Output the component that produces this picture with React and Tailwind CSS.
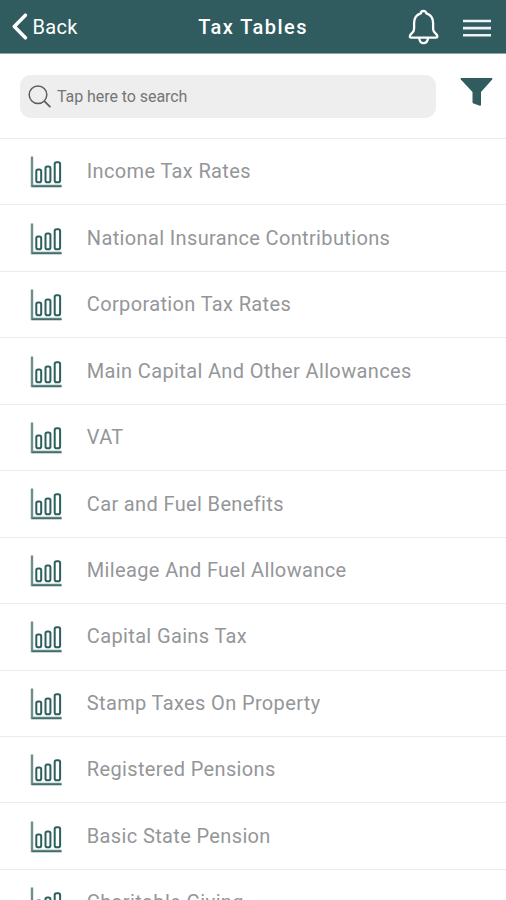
import React from "react";

const TAX_TABLES = [
  "Income Tax Rates",
  "National Insurance Contributions",
  "Corporation Tax Rates",
  "Main Capital And Other Allowances",
  "VAT",
  "Car and Fuel Benefits",
  "Mileage And Fuel Allowance",
  "Capital Gains Tax",
  "Stamp Taxes On Property",
  "Registered Pensions",
  "Basic State Pension",
  "Charitable Giving",
];

function ChartIcon() {
  return (
    <svg width="32" height="32" viewBox="0 0 32 32" fill="none" className="mt-px shrink-0">
      <path d="M2 0.5V30H31.5" stroke="#6d8f8c" strokeWidth="2.4" />
      <path d="M2 30.4H31.5" stroke="#41706e" strokeWidth="1.4" />
      <g stroke="#2c605f" strokeWidth="2">
        <rect x="6.3" y="13.4" width="4.9" height="12.8" rx="1.8" />
        <rect x="15.5" y="10.5" width="4.9" height="15.7" rx="1.8" />
        <rect x="24.7" y="6.3" width="5.4" height="19.9" rx="1.8" />
      </g>
    </svg>
  );
}

function Header() {
  return (
    <header className="grid h-[54px] shrink-0 grid-cols-[1fr_auto_1fr] items-center border-b border-[#8ba3a5] bg-[#305c5f] text-white">
      <button className="flex items-center pl-3">
        <svg width="16" height="27" viewBox="0 0 16 27" fill="none">
          <path
            d="M13.4 2.2L2.3 13.5L13.4 24.8"
            stroke="currentColor"
            strokeWidth="3.5"
            strokeLinecap="round"
            strokeLinejoin="round"
          />
        </svg>
        <span className="pl-[4.5px] pt-px text-[20px] leading-6 tracking-[0.3px]">Back</span>
      </button>

      <h1 className="pt-px text-[20px] font-medium leading-6 tracking-[1.45px]">
        Tax Tables
      </h1>

      <div className="flex items-center justify-end gap-[23px] pr-[15px]">
        <svg width="32" height="36" viewBox="0 0 32 36" fill="none">
          <g stroke="currentColor" strokeWidth="2.3" strokeLinejoin="round">
            <path d="M12.8 4.4C12.8 1.2 18.4 1.2 18.4 4.4C22.6 5.8 25.1 9 25.1 14V20C25.1 24 29.4 24.6 29.4 27.4C29.4 28.3 28.8 28.6 28 28.6H3.2C2.4 28.6 1.8 28.3 1.8 27.4C1.8 24.6 6.1 24 6.1 20V14C6.1 9 8.6 5.8 12.8 4.4Z" />
            <path d="M11.2 28.8C11.2 36 20 36 20 28.8" />
          </g>
        </svg>
        <svg width="28" height="20" viewBox="0 0 28 20" className="mt-[2px]">
          <path
            d="M0 3H28M0 10.1H28M0 17.2H28"
            stroke="#edf3f6"
            strokeWidth="2.6"
          />
        </svg>
      </div>
    </header>
  );
}

function SearchBar() {
  return (
    <div className="flex h-[84px] shrink-0 items-start pl-5 pr-[13px] pt-[21px]">
      <div className="flex h-[43px] w-[416px] items-center rounded-[11px] bg-[#eeeeee] pl-[7px]">
        <svg width="25" height="25" viewBox="0 0 25 25" fill="none">
          <circle cx="11" cy="10.8" r="8.8" stroke="#5c5c5c" strokeWidth="1.5" />
          <path d="M17.3 17.1L23.4 23.2" stroke="#5c5c5c" strokeWidth="1.8" />
        </svg>
        <span className="pl-[5px] text-[16px] tracking-[-0.06px] text-[#757575]">
          Tap here to search
        </span>
      </div>
      <svg width="33" height="30" viewBox="0 0 33 30" className="ml-auto mt-[2px]">
        <path
          d="M1.5 1H31.5C32.4 1 32.7 1.7 32.2 2.4L21 15V27.5C21 28.7 20.2 29.2 19.2 28.6L13.6 26.5C12.9 26.2 12.5 25.8 12.5 25V15L0.8 2.4C0.3 1.7 0.6 1 1.5 1Z"
          fill="#305c5f"
        />
      </svg>
    </div>
  );
}

function App() {
  return (
    <div className="flex h-[900px] w-[506px] flex-col overflow-hidden bg-white font-['Roboto',sans-serif]">
      <Header />
      <SearchBar />
      <ul>
        {TAX_TABLES.map((name) => (
          <li
            key={name}
            className="flex h-[66.45px] items-center border-t-[1.5px] border-[#ebebeb] pl-[30px]"
          >
            <ChartIcon />
            <span className="pb-[0.8px] pl-[24.8px] text-[20px] leading-6 tracking-[0.36px] text-[#949699]">
              {name}
            </span>
          </li>
        ))}
      </ul>
    </div>
  );
}

export default App;
